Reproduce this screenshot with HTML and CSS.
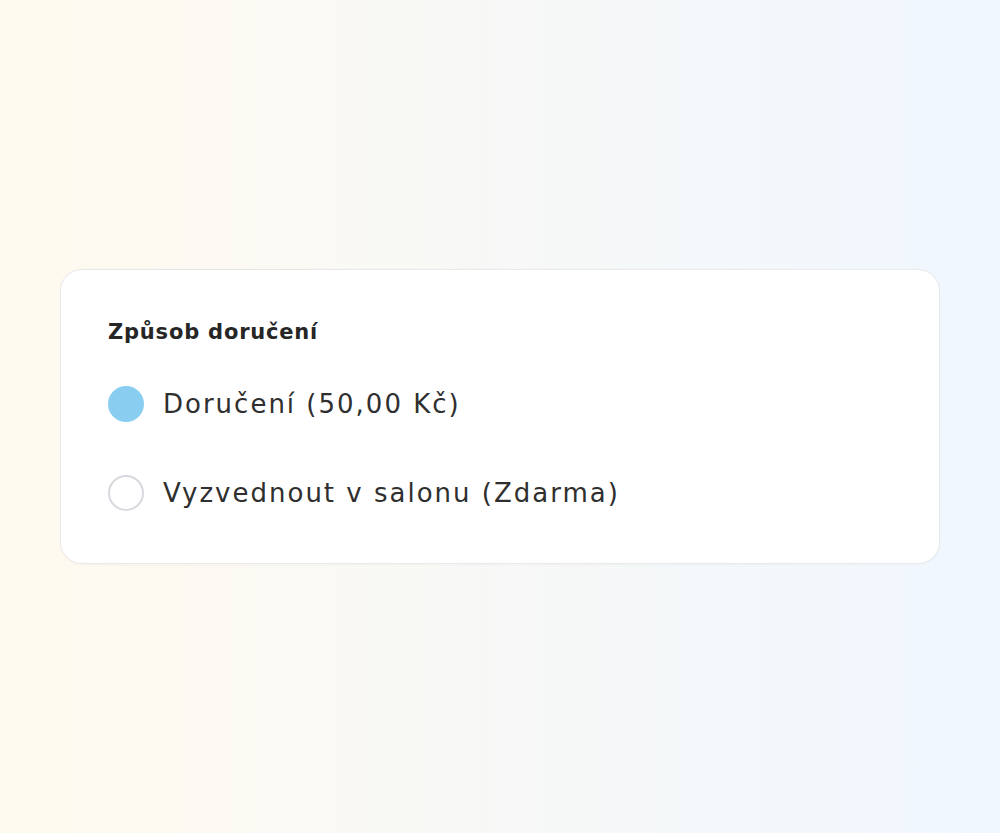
FILE: index.html
```html
<!DOCTYPE html>
<html lang="cs">
<head>
<meta charset="utf-8">
<title>Způsob doručení</title>
<link rel="stylesheet" href="styles.css">
</head>
<body>
<main class="page">
  <section class="card">
    <h2 class="card-title">Způsob doručení</h2>
    <div class="options">
      <label class="option">
        <span class="radio radio-checked"></span>
        <span class="option-label">Doručení (50,00 Kč)</span>
      </label>
      <label class="option">
        <span class="radio"></span>
        <span class="option-label">Vyzvednout v salonu (Zdarma)</span>
      </label>
    </div>
  </section>
</main>
</body>
</html>
```

FILE: styles.css
```css
html, body {
  margin: 0;
  padding: 0;
}
body {
  font-family: "DejaVu Sans", Inter, "Liberation Sans", sans-serif;
  background: linear-gradient(90deg, #fffaef 0%, #f0f7ff 100%);
  color: #2b2b2b;
}
.page {
  min-height: 833px;
  display: flex;
  align-items: center;
  justify-content: center;
  padding: 0 60px;
  box-sizing: border-box;
}
.card {
  flex: 1;
  background: #ffffff;
  border: 1px solid #e9e9e9;
  border-radius: 22px;
  padding: 48px 47px 46px;
  box-shadow: 0 1px 3px rgba(0, 0, 0, 0.03);
}
.card-title {
  margin: 0;
  font-size: 21px;
  line-height: 28px;
  font-weight: 700;
  color: #262626;
  letter-spacing: 0.8px;
}
.options {
  margin-top: 34px;
  display: flex;
  flex-direction: column;
  gap: 41px;
}
.option {
  display: flex;
  align-items: center;
  gap: 19px;
  height: 48px;
}
.radio {
  width: 36px;
  height: 36px;
  box-sizing: border-box;
  border-radius: 50%;
  border: 2px solid #d7d9de;
  background: #ffffff;
  flex: none;
}
.radio-checked {
  border: none;
  background: #89cdf1;
}
.option-label {
  font-size: 26px;
  line-height: 36px;
  letter-spacing: 2px;
  color: #2f2f2f;
}
```
